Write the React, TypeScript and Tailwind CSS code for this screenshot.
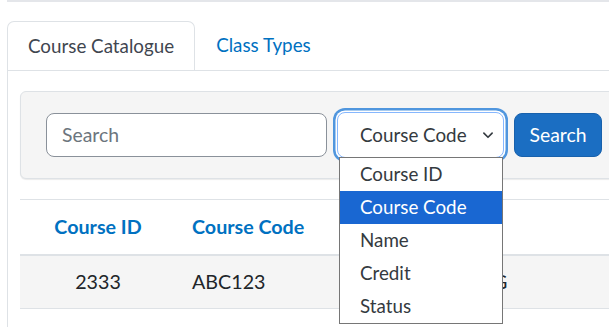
import React from "react";

const options = ["Course ID", "Course Code", "Name", "Credit", "Status"];

function Chevron() {
  return (
    <svg width="12" height="12" viewBox="0 0 16 16" fill="none" className="shrink-0">
      <path d="M2.5 5.5l5.5 5.5 5.5-5.5" stroke="#343a40" strokeWidth="2.2" strokeLinecap="round" strokeLinejoin="round" />
    </svg>
  );
}

function SearchBar() {
  return (
    <div className="flex items-center gap-[10px] rounded-[6px] border border-[#dee2e6] bg-[#f5f5f5] py-[20px] pl-[25px] shadow-[0_1px_1px_rgba(0,0,0,0.08)]">
      <div className="flex h-[44px] w-[281px] shrink-0 items-center rounded-[8px] border border-[#8a919a] bg-white pl-[15px] text-[19.4px] text-[#6c757d]">
        Search
      </div>
      <div className="relative shrink-0">
        <div className="flex h-[46px] w-[167px] items-center justify-between rounded-[8px] border border-[#86b7fe] bg-white pl-[22px] pr-[9px] text-[18.8px] text-[#343a40] shadow-[0_0_0_1.5px_#ffffff,0_0_0_4px_#5096de]">
          <span>Course Code</span>
          <Chevron />
        </div>
        <div className="absolute left-[2px] top-[45px] z-10 w-[164px] border border-[#767676] bg-white text-[18.8px] text-[#343a40]">
          {options.map((o) => (
            <div
              key={o}
              className={
                "flex h-[33px] items-center pl-[20px] " +
                (o === "Course Code" ? "bg-[#1967d2] text-white" : "")
              }
            >
              {o}
            </div>
          ))}
        </div>
      </div>
      <button
        type="button"
        className="h-[44px] w-[88px] shrink-0 rounded-[8px] border border-[#1861ac] bg-[#1b6ec2] text-[19.4px] text-white"
      >
        Search
      </button>
    </div>
  );
}

function CourseTable() {
  return (
    <table className="mt-[20px] w-full border-collapse text-[19.7px]">
      <thead>
        <tr className="h-[55px] border-t border-b-2 border-[#dee2e6] font-bold text-[#0071c1]">
          <th className="w-[156px] text-center font-bold">Course ID</th>
          <th className="w-[165px] pl-[16px] text-left font-bold">Course Code</th>
          <th className="pl-[15px] text-left font-bold">Name</th>
        </tr>
      </thead>
      <tbody>
        <tr className="h-[54px] border-b border-[#dee2e6] bg-[#f5f5f5] text-[#212529]">
          <td className="text-center">2333</td>
          <td className="pl-[16px]">ABC123</td>
          <td className="pl-[15px] whitespace-nowrap">PROGRAMMING</td>
        </tr>
      </tbody>
    </table>
  );
}

export default function App() {
  return (
    <div className="flex h-[327px] w-[609px] flex-col overflow-hidden bg-white pl-[7px] font-['Lato',sans-serif]">
      <div className="h-[21px] shrink-0 border-t-2 border-[#e4e6ea]" />
      <div className="flex shrink-0 border-b border-[#dee2e6] text-[18.8px]">
        <div className="-mb-px flex h-[49px] items-center rounded-t-[7px] border border-b-0 border-[#dee2e6] bg-white px-[20px] text-[#3f4650]">
          Course Catalogue
        </div>
        <div className="flex h-[49px] items-center px-[21px] text-[#0071c1]">Class Types</div>
      </div>
      <div className="flex-1 border-l border-[#dee2e6] pl-[12px] pt-[20px]">
        <div className="w-[620px]">
          <SearchBar />
          <CourseTable />
        </div>
      </div>
    </div>
  );
}
